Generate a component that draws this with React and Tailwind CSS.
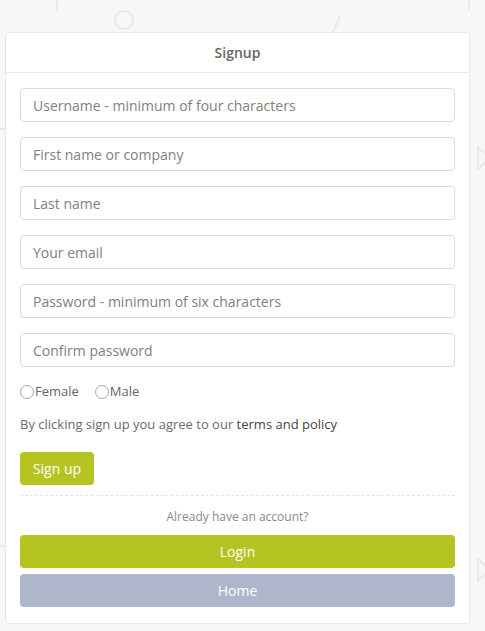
import React from 'react';

const fields = [
  'Username - minimum of four characters',
  'First name or company',
  'Last name',
  'Your email',
  'Password - minimum of six characters',
  'Confirm password',
];

const Backdrop = () => (
  <svg className="absolute inset-0 h-full w-full" viewBox="0 0 485 631" fill="none" stroke="#e9e9ea" strokeWidth="2">
    <line x1="57" y1="0" x2="57" y2="10" />
    <line x1="469" y1="0" x2="469" y2="10" />
    <circle cx="124" cy="20" r="9" />
    <path d="M340 16 L333 32" />
    <path d="M478 147 L478 169 L490 158 Z" />
    <path d="M478 559 L478 581 L490 570 Z" />
    <line x1="0" y1="129" x2="5" y2="129" />
    <line x1="0" y1="546" x2="5" y2="546" />
  </svg>
);

const Radio = ({ label }) => (
  <label className="flex items-center text-[13px] text-[#666]">
    <span className="mr-[1px] h-[14px] w-[14px] rounded-full border border-[#a8a8a8] bg-white" />
    {label}
  </label>
);

export default function App() {
  return (
    <div
      className="relative h-[631px] w-[485px] overflow-hidden bg-[#f7f7f7]"
      style={{ fontFamily: '"Open Sans", sans-serif' }}
    >
      <Backdrop />
      <div className="relative ml-[5px] mt-[32px] w-[465px] rounded-[4px] border border-[#e5e8ef] bg-white">
        <div className="flex h-[40px] items-center justify-center border-b border-[#e5e8ef] text-[14px] font-semibold text-[#666]">
          Signup
        </div>
        <div className="px-[14px] pt-[15px] pb-[16px]">
          {fields.map((f) => (
            <input
              key={f}
              placeholder={f}
              className="mb-[15px] block h-[34px] w-full rounded-[4px] border border-[#dadce5] px-[12px] text-[14px] text-[#555] outline-none placeholder:text-[#808080]"
            />
          ))}
          <div className="flex h-[19px] items-center gap-[16px]">
            <Radio label="Female" />
            <Radio label="Male" />
          </div>
          <p className="mt-[13px] text-[13px] leading-[20px] text-[#6b6b6b]">
            By clicking sign up you agree to our <span className="text-[#444]">terms and policy</span>
          </p>
          <button className="mt-[18px] h-[33px] w-[74px] rounded-[4px] bg-[#b5c420] text-[14px] text-white">
            Sign up
          </button>
          <div className="mt-[10px] border-t border-dashed border-[#e3e3e3]" />
          <p className="mt-[12px] text-center text-[12px] leading-[18px] text-[#8a8a8a]">
            Already have an account?
          </p>
          <button className="mt-[9px] block h-[33px] w-full rounded-[4px] bg-[#b5c420] text-[14px] text-white">
            Login
          </button>
          <button className="mt-[6px] block h-[33px] w-full rounded-[4px] bg-[#adb6cb] text-[14px] text-white">
            Home
          </button>
        </div>
      </div>
    </div>
  );
}
